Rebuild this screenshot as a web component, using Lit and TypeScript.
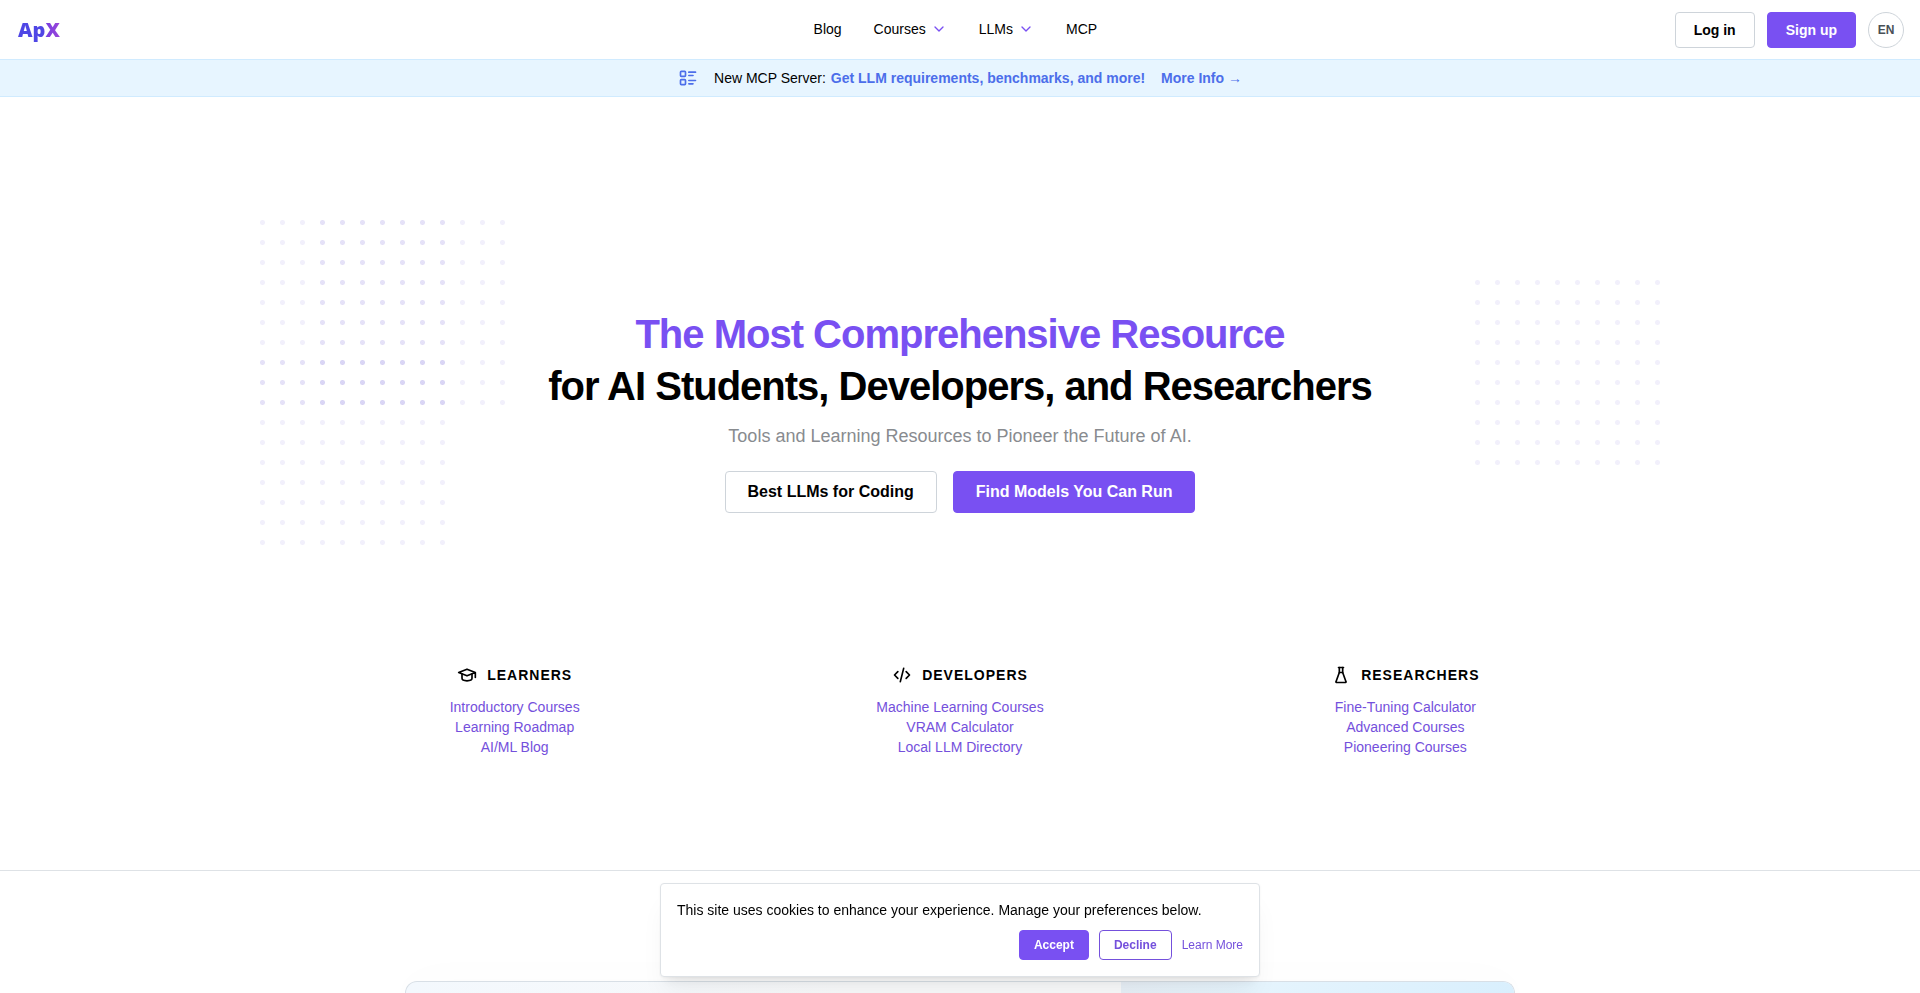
import { LitElement, html, css, svg } from "lit";
import { customElement } from "lit/decorators.js";

const icon = (size: number, width: number, body: unknown) => html`
  <svg width=${size} height=${size} viewBox="0 0 24 24" fill="none" stroke="currentColor"
    stroke-width=${width} stroke-linecap="round" stroke-linejoin="round" aria-hidden="true">${body}</svg>`;

const chevron = svg`<path d="M6 9l6 6l6 -6"/>`;
const listDetails = svg`<path d="M13 5h8M13 9h5M13 15h8M13 19h5"/><rect x="3" y="4" width="6" height="6" rx="1"/><rect x="3" y="14" width="6" height="6" rx="1"/>`;
const school = svg`<path d="M22 9l-10 -4l-10 4l10 4l10 -4v6"/><path d="M6 10.6v5.4a6 3 0 0 0 12 0v-5.4"/>`;
const code = svg`<path d="M7 8l-4 4l4 4"/><path d="M17 8l4 4l-4 4"/><path d="M14 4l-4 16"/>`;
const flask = svg`<path d="M9 3h6"/><path d="M10 9h4"/><path d="M10 3v6l-4 11a.7 .7 0 0 0 .5 1h11a.7 .7 0 0 0 .5 -1l-4 -11v-6"/>`;

const topics = [
  { title: "Learners", icon: school, links: ["Introductory Courses", "Learning Roadmap", "AI/ML Blog"] },
  { title: "Developers", icon: code, links: ["Machine Learning Courses", "VRAM Calculator", "Local LLM Directory"] },
  { title: "Researchers", icon: flask, links: ["Fine-Tuning Calculator", "Advanced Courses", "Pioneering Courses"] },
];

@customElement("dot-grid")
export class DotGrid extends LitElement {
  static styles = css`
    :host { display: block; width: 200px; height: 200px; }
    .dots {
      width: 100%;
      height: 100%;
      background: radial-gradient(circle at 2.5px 2.5px, rgba(105, 85, 215, 0.09) 2px, transparent 3px) 0 0 / 20px 20px;
    }
  `;
  render() {
    return html`<div class="dots"></div>`;
  }
}

@customElement("app-root")
export class AppRoot extends LitElement {
  static styles = css`
    :host {
      display: flex;
      flex-direction: column;
      min-height: 100vh;
      background: #fff;
      color: #000;
      font: 14px/20px "Liberation Sans", Arial, sans-serif;
    }
    * { box-sizing: border-box; }
    a { color: inherit; text-decoration: none; }
    svg { display: block; flex: none; }
    button { font: inherit; cursor: pointer; margin: 0; }

    .header {
      display: flex;
      align-items: center;
      justify-content: space-between;
      height: 60px;
      padding: 0 16px;
      border-bottom: 1px solid #d0ebff;
    }
    .brand { width: 220px; padding-left: 2px; }
    .logo {
      display: inline-block;
      font: 800 20px/28px "Open Sans", sans-serif;
      background: linear-gradient(90deg, #4f46e5 60%, #7c3fe0 70%, #9a45d8);
      background-clip: text;
      -webkit-background-clip: text;
      color: transparent;
    }
    .nav { display: flex; gap: 32px; padding-bottom: 2px; }
    .nav a { display: flex; align-items: center; gap: 5px; }
    .nav svg { color: #7950f2; }
    .account { display: flex; gap: 12px; }

    .btn {
      display: inline-flex;
      align-items: center;
      justify-content: center;
      height: 36px;
      padding: 0 18px;
      border: 1px solid #ced4da;
      border-radius: 4px;
      background: #fff;
      color: #000;
      font-weight: 700;
      white-space: nowrap;
    }
    .primary { background: #7950f2; border-color: #7950f2; color: #fff; }
    .outline { border-color: #7450dc; color: #7450dc; }
    .large { height: 42px; padding: 0 22px; font-size: 16px; }
    .small { height: 30px; padding: 0 14px; font-size: 12px; }
    .lang {
      width: 36px;
      height: 36px;
      padding: 0;
      border: 1px solid #ced4da;
      border-radius: 50%;
      background: #fff;
      color: #495057;
      font-size: 12px;
      font-weight: 700;
    }

    .banner {
      display: flex;
      align-items: center;
      justify-content: center;
      gap: 16px;
      height: 37px;
      background: #e7f5ff;
      border-bottom: 1px solid #d0ebff;
    }
    .message { display: flex; gap: 5px; }
    .banner a, .banner svg { color: #4c6eea; }
    .banner a { font-weight: 700; }

    .hero {
      position: relative;
      width: 100%;
      max-width: 1400px;
      margin: 123px auto 0;
      padding-top: 88px;
      text-align: center;
    }
    .dots { position: absolute; z-index: 0; }
    .dots-a { left: 0; top: 0; }
    .dots-b { left: 60px; top: 0; }
    .dots-c { left: 0; top: 140px; }
    .dots-d { right: -15px; top: 60px; }
    .copy { position: relative; z-index: 1; }
    h1 {
      margin: 0 0 10px;
      font-size: 40px;
      line-height: 52px;
      font-weight: 700;
      letter-spacing: -1px;
    }
    h1 span { display: block; }
    .accent { color: #7950f2; }
    .lead { margin: 0; font-size: 18px; line-height: 28px; color: #888b8f; }
    .actions { display: flex; justify-content: center; gap: 16px; margin-top: 21px; }

    .topics {
      display: grid;
      grid-template-columns: repeat(3, 1fr);
      width: 100%;
      max-width: 1336px;
      margin: 152px auto 0;
      padding-bottom: 113px;
    }
    .topic { display: flex; flex-direction: column; align-items: center; }
    .topic h2 {
      display: flex;
      align-items: center;
      gap: 10px;
      margin: 0 0 12px;
      font-size: 14px;
      line-height: 20px;
      font-weight: 700;
      letter-spacing: 1px;
      text-transform: uppercase;
    }
    .topic a { color: #7450dc; line-height: 20px; }
    .topic ul { margin: 0; padding: 0; list-style: none; text-align: center; }

    .showcase {
      flex: 1;
      display: flex;
      width: 100%;
      padding: 110px 16px 0;
      border-top: 1px solid #dee2e6;
      overflow: hidden;
    }
    .card {
      flex: 1;
      display: grid;
      grid-template-columns: 715fr 393fr;
      max-width: 1110px;
      margin: 0 auto;
      border: 1px solid #d8dfe6;
      border-bottom: 0;
      border-radius: 24px 24px 0 0;
      background: linear-gradient(90deg, #f3f8fd, #f8f9fa 40%);
      box-shadow: 0 10px 50px rgba(0, 0, 0, 0.05);
      overflow: hidden;
    }
    .side { grid-column: 2; background: linear-gradient(90deg, #e7eff6, #e5f4fd 35%, #d9effd); }

    .cookies {
      position: fixed;
      left: 50%;
      bottom: 16px;
      z-index: 10;
      width: 600px;
      max-width: calc(100% - 32px);
      transform: translateX(-50%);
      padding: 16px;
      border: 1px solid #dee2e6;
      border-radius: 4px;
      background: #fff;
      box-shadow: 0 1px 3px rgba(0, 0, 0, 0.05), 0 20px 25px -5px rgba(0, 0, 0, 0.05), 0 10px 10px -5px rgba(0, 0, 0, 0.06);
    }
    .cookies p { margin: 0 0 10px; }
    .choices { display: flex; align-items: center; justify-content: flex-end; gap: 10px; }
    .choices a { font-size: 12px; color: #7450dc; }
  `;

  render() {
    return html`
      <header class="header">
        <div class="brand"><a class="logo" href="#">ApX</a></div>
        <nav class="nav" aria-label="Main">
          <a href="#">Blog</a>
          <a href="#">Courses ${icon(16, 2, chevron)}</a>
          <a href="#">LLMs ${icon(16, 2, chevron)}</a>
          <a href="#">MCP</a>
        </nav>
        <div class="account">
          <button class="btn">Log in</button>
          <button class="btn primary">Sign up</button>
          <button class="lang" aria-label="Language: EN">EN</button>
        </div>
      </header>

      <aside class="banner">
        ${icon(20, 2, listDetails)}
        <span class="message"><span>New MCP Server:</span><a href="#">Get LLM requirements, benchmarks, and more!</a></span>
        <a href="#">More Info →</a>
      </aside>

      <section class="hero">
        <dot-grid class="dots dots-a"></dot-grid>
        <dot-grid class="dots dots-b"></dot-grid>
        <dot-grid class="dots dots-c"></dot-grid>
        <dot-grid class="dots dots-d"></dot-grid>
        <div class="copy">
          <h1><span class="accent">The Most Comprehensive Resource</span><span>for AI Students, Developers, and Researchers</span></h1>
          <p class="lead">Tools and Learning Resources to Pioneer the Future of AI.</p>
          <div class="actions">
            <a class="btn large" href="#">Best LLMs for Coding</a>
            <a class="btn large primary" href="#">Find Models You Can Run</a>
          </div>
        </div>
      </section>

      <section class="topics">
        ${topics.map((t) => html`
          <div class="topic">
            <h2>${icon(20, 2, t.icon)}${t.title}</h2>
            <ul>${t.links.map((l) => html`<li><a href="#">${l}</a></li>`)}</ul>
          </div>`)}
      </section>

      <section class="showcase">
        <div class="card"><div class="side"></div></div>
      </section>

      <div class="cookies" role="dialog" aria-label="Cookie preferences">
        <p>This site uses cookies to enhance your experience. Manage your preferences below.</p>
        <div class="choices">
          <button class="btn small primary">Accept</button>
          <button class="btn small outline">Decline</button>
          <a href="#">Learn More</a>
        </div>
      </div>
    `;
  }
}
